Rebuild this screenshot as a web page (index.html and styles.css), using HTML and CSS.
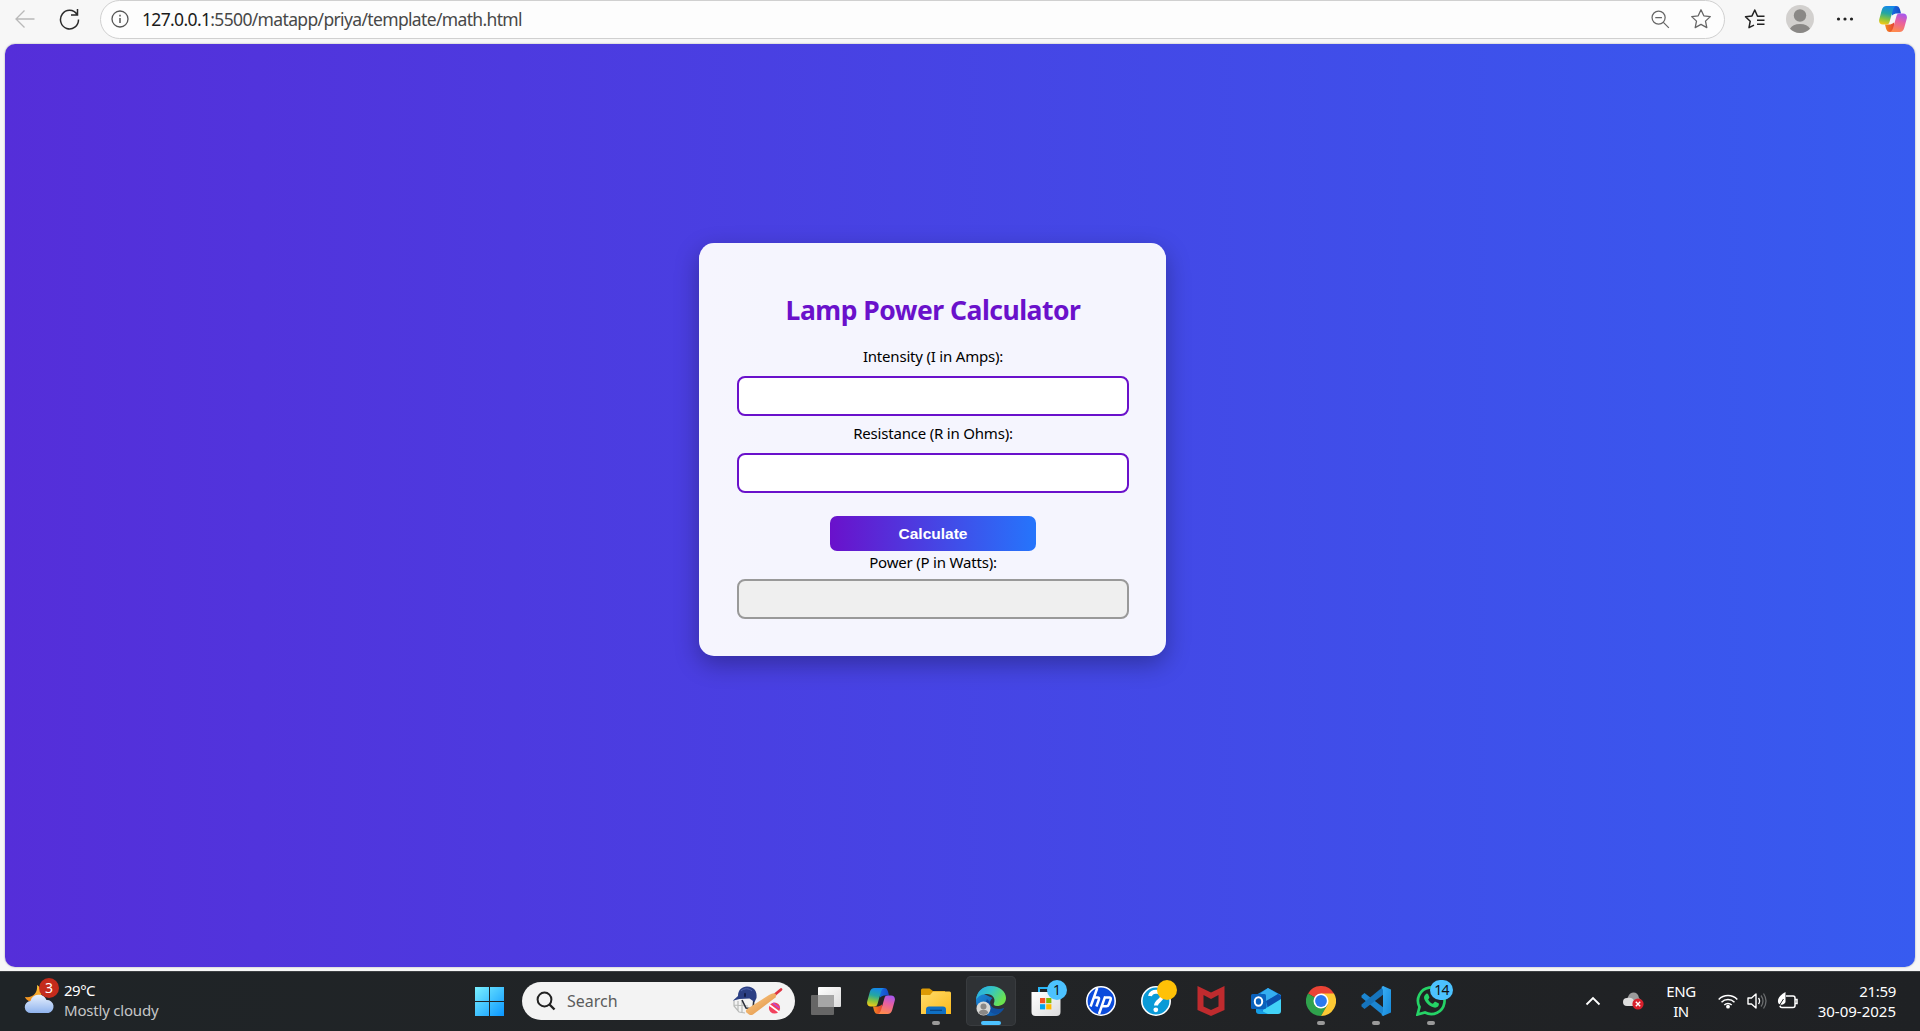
FILE: index.html
```html
<!DOCTYPE html>
<html lang="en">
<head>
<meta charset="utf-8">
<title>Lamp Power Calculator</title>
<link rel="stylesheet" href="styles.css">
</head>
<body>
<svg class="defs" width="0" height="0" aria-hidden="true">
  <defs>
    <linearGradient id="cpTop" x1="0" y1="0" x2="1" y2="0"><stop offset="0" stop-color="#1670e0"/><stop offset="1" stop-color="#1648c8"/></linearGradient>
    <linearGradient id="cpLeft" x1=".5" y1="0" x2=".3" y2="1"><stop offset="0" stop-color="#1487ea"/><stop offset=".4" stop-color="#25a7a0"/><stop offset=".7" stop-color="#86c440"/><stop offset="1" stop-color="#f6c916"/></linearGradient>
    <linearGradient id="cpRight" x1=".7" y1="0" x2=".4" y2="1"><stop offset="0" stop-color="#a757ee"/><stop offset=".45" stop-color="#e9609f"/><stop offset="1" stop-color="#ff8a4d"/></linearGradient>
    <linearGradient id="cpBottom" x1="0" y1="0" x2="1" y2="0"><stop offset="0" stop-color="#f58b1f"/><stop offset="1" stop-color="#e23b33"/></linearGradient>
    <symbol id="copilot" viewBox="0 0 28 26">
      <path d="M12 0h5c2.200 0 3.200 1 4 3.500L22 7.500h-3.500c-2.500 0-3.500.5-5.500 2z" fill="url(#cpTop)"/>
      <path d="M16 26h-5c-2.200 0-3.200-1-4-3.500L6 18.500h3.500c2.500 0 3.500-.5 5.500-2z" fill="url(#cpBottom)"/>
      <path d="M7.500 0H17c-1.800.8-2.500 2.200-3.200 4.500L10.500 16c-.6 1.800-1.500 2.500-3.500 2.500H4C1 18.500-.4 16.500.2 13.500L2.800 4C3.600 1.200 5 0 7.500 0z" fill="url(#cpLeft)"/>
      <path d="M20.500 26H11c1.800-.8 2.500-2.200 3.200-4.500L17.500 10c.6-1.800 1.500-2.500 3.500-2.500h3c3 0 4.400 2 3.800 5L25.200 22c-.8 2.800-2.200 4-4.700 4z" fill="url(#cpRight)"/>
    </symbol>
    <linearGradient id="win" x1="0" y1="0" x2="1" y2="1"><stop offset="0" stop-color="#7af0ff"/><stop offset="1" stop-color="#0a96ff"/></linearGradient>
    <linearGradient id="folder" x1="0" y1="0" x2="1" y2="1"><stop offset="0" stop-color="#ffdc6b"/><stop offset="1" stop-color="#fcba1c"/></linearGradient>
    <linearGradient id="edgeTop" x1="0" y1="0" x2="1" y2=".5"><stop offset="0" stop-color="#27a6e8"/><stop offset=".5" stop-color="#35c5c5"/><stop offset="1" stop-color="#6be34e"/></linearGradient>
    <linearGradient id="edgeLow" x1="0" y1="0" x2="1" y2="1"><stop offset="0" stop-color="#1e8fe0"/><stop offset="1" stop-color="#0b4f9e"/></linearGradient>
    <linearGradient id="cloud" x1="0" y1="0" x2="0" y2="1"><stop offset="0" stop-color="#e8f1fd"/><stop offset="1" stop-color="#8fb3ee"/></linearGradient>
    <linearGradient id="moon" x1="0" y1="0" x2="0" y2="1"><stop offset="0" stop-color="#ffc83a"/><stop offset="1" stop-color="#f0891c"/></linearGradient>
    <linearGradient id="bat" x1="0" y1="0" x2="1" y2="1"><stop offset="0" stop-color="#ffcf8c"/><stop offset="1" stop-color="#dc8b3c"/></linearGradient>
    <linearGradient id="paper" x1="0" y1="0" x2="1" y2="1"><stop offset="0" stop-color="#ffffff"/><stop offset="1" stop-color="#dcdcdc"/></linearGradient>
    <linearGradient id="code" x1="0" y1="0" x2="1" y2="1"><stop offset="0" stop-color="#3ab0f7"/><stop offset="1" stop-color="#1688d8"/></linearGradient>
  </defs>
</svg>

<header class="toolbar">
  <svg class="back" width="20" height="20" viewBox="0 0 20 20"><path d="M19.500 10H1.200M9.500 1.500 1 10l8.500 8.500" fill="none" stroke="#b9b9b9" stroke-width="1.300"/></svg>
  <svg class="reload" width="21" height="22" viewBox="0 0 20 22"><path d="M17.500 6.500A9 9.300 0 1 0 19 11.500M18 1v6h-6.500" fill="none" stroke="#2a2a2a" stroke-width="1.500"/></svg>
  <div class="address">
    <svg class="info" width="18" height="18" viewBox="0 0 18 18"><circle cx="9" cy="9" r="8" fill="none" stroke="#555" stroke-width="1.300"/><path d="M9 8v5M9 4.700v1.800" stroke="#555" stroke-width="1.500"/></svg>
    <span class="url"><span class="host">127.0.0.1</span>:5500/matapp/priya/template/math.html</span>
    <svg class="zoom" width="19" height="19" viewBox="0 0 20 20"><circle cx="8" cy="8" r="6.900" fill="none" stroke="#666" stroke-width="1.300"/><path d="M4.500 8h7M13 13l5.800 5.800" stroke="#666" stroke-width="1.300"/></svg>
    <svg class="star" width="22" height="22" viewBox="0 0 22 22"><path d="m11 1.800 2.800 6 6.500.8-4.800 4.500 1.300 6.500-5.800-3.200-5.800 3.200 1.300-6.500L1.700 8.600l6.500-.8z" fill="none" stroke="#666" stroke-width="1.300" stroke-linejoin="round"/></svg>
  </div>
  <svg class="favs" width="22" height="22" viewBox="0 0 22 22"><path d="M20.500 8.300h-7L10.800 2 8 7.900l-6.500.9 4.700 4.500L5 19.700l5-2.600M13 12.300h7.500M13 16.200h7.500" fill="none" stroke="#222" stroke-width="1.500" stroke-linejoin="round"/></svg>
  <svg class="avatar" width="28" height="28" viewBox="0 0 28 28"><circle cx="14" cy="14" r="14" fill="#d2d0ce"/><circle cx="14" cy="10.500" r="6.200" fill="#8a8886"/><path d="M4 23.800a10.600 7 0 0 1 20 0 14 14 0 0 1-20 0z" fill="#8a8886"/></svg>
  <svg class="dots" width="18" height="6" viewBox="0 0 18 6"><g fill="#222"><circle cx="2.500" cy="3" r="1.600"/><circle cx="9" cy="3" r="1.600"/><circle cx="15.500" cy="3" r="1.600"/></g></svg>
  <svg class="assistant" width="28" height="26"><use href="#copilot"/></svg>
</header>

<main class="page">
  <section class="card">
    <h1>Lamp Power Calculator</h1>
    <label class="l-int" for="i">Intensity (I in Amps):</label>
    <input id="i" type="text">
    <label class="l-res" for="r">Resistance (R in Ohms):</label>
    <input id="r" type="text">
    <button type="button">Calculate</button>
    <label class="l-pow" for="p">Power (P in Watts):</label>
    <input id="p" type="text" readonly>
  </section>
</main>

<footer class="taskbar">
  <div class="weather">
    <div class="weather-icon">
      <svg width="32" height="32" viewBox="0 0 32 32"><path d="M13 2c1 8-4 13-12 12 2 5 10 7 14 3S18 5 13 2z" fill="url(#moon)"/><path d="M7 30a6 6 0 0 1-.5-12A8.500 8.500 0 0 1 22.500 17a6.600 6.600 0 0 1 2 13z" fill="url(#cloud)"/></svg>
      <span class="alert">3</span>
    </div>
    <div class="weather-text"><span class="temp">29°C</span><span class="sky">Mostly cloudy</span></div>
  </div>

  <div class="start"><svg width="29" height="29" viewBox="0 0 29 29"><path d="M0 0h14v14H0zM15 0h14v14H15zM0 15h14v14H0zM15 15h14v14H15z" fill="url(#win)"/></svg></div>

  <div class="search">
    <svg width="20" height="20" viewBox="0 0 20 20"><circle cx="8.500" cy="8.500" r="6.900" fill="none" stroke="#222" stroke-width="2"/><path d="m13.500 13.500 5 5" stroke="#222" stroke-width="2.400"/></svg>
    <span class="search-text">Search</span>
    <svg class="cricket" width="50" height="30" viewBox="0 0 50 30"><path d="M1 14v6l5 6 6 1M1 19l14 1M5 15v10M9 15v11" fill="none" stroke="#b8bab8" stroke-width="1.200"/><path d="M9 14 13 22 20 23 21 12" fill="none" stroke="#2b2f3a" stroke-width="1.600"/><path d="M0 14.500 5 10C5 4 9 .5 14 .5c7 0 10.500 5 9.500 11.500l-2 4-5-3.500-10 .5-6 1.500z" fill="#2b3f83"/><path d="M8 5c3-3 8-3 11 0" stroke="#5269b0" fill="none"/><ellipse cx="12" cy="9" rx="1" ry="2.300" fill="#131c46"/><path d="m42 8.500 6-5" stroke="#de3442" stroke-width="2.800" stroke-linecap="round"/><path d="M14 23 36 9q4-2.500 6-1.500t.5 4L20 28.500q-2 1-4 0l-2.500-2q-1.500-1.500.5-3.500z" fill="url(#bat)"/><circle cx="41.500" cy="22" r="5.600" fill="#f2415c"/><path d="m36.500 19 9.500 7" stroke="#fff" stroke-width="1.600"/><path d="m40 17 6.500 5" stroke="#b44be0" stroke-width="1.400"/></svg>
  </div>

  <nav class="apps">
    <div class="app"><svg width="30" height="30" viewBox="0 0 30 30"><rect x="7" y="1" width="23" height="20" rx="1" fill="url(#paper)"/><rect y="9" width="23" height="20" rx="1" fill="#666"/><path d="M7 9h16v12H7z" fill="#a6a6a6"/></svg></div>
    <div class="app"><svg width="28" height="26"><use href="#copilot"/></svg></div>
    <div class="app"><svg width="30" height="30" viewBox="0 0 30 30"><path d="M0 4q0-1.500 1.500-1.500h7L12 5h12v6H0z" fill="#dd9a05"/><path d="M0 9h9l3-3.500h16.500Q30 5.500 30 7v21H0z" fill="url(#folder)"/><path d="M5 28v-4.500q0-3 3-3h14q3 0 3 3V28z" fill="#0f70c4"/><path d="M9 24.300h12" stroke="#08427f" stroke-width="1.200"/></svg><i class="mark"></i></div>
    <div class="app active"><svg width="30" height="30" viewBox="0 0 30 30"><path d="M15 0C6 0 0 7 0 15s7 15 15 15c6 0 10-3 13-8-5 3-14 2-14-5 0-2 1-4 2.500-5L8 8z" fill="url(#edgeLow)"/><path d="M0 14C1 5 7 0 15 0c9 0 15 6 15 12 0 6-5 8-9 8-3 0-4-1.500-3-3 2-5-2-9-7-9-5 0-9 2-11 6z" fill="url(#edgeTop)"/><path d="M11 13c-3 5 0 13 8 15 4 0 8-3 9-6-6 2-14 1-14-6z" fill="#104f9f"/><circle cx="7.500" cy="22.500" r="7" fill="#d7d7d5"/><circle cx="7.500" cy="20.500" r="3" fill="#8a8886"/><path d="M2.700 27a4.900 4 0 0 1 9.600 0 7 7 0 0 1-9.600 0z" fill="#8a8886"/></svg><i class="mark"></i></div>
    <div class="app"><svg width="30" height="30" viewBox="0 0 30 30"><path d="M8 7V2h12" fill="none" stroke="#29b6f6" stroke-width="2"/><path d="M.5 6h29v20q0 4-4 4h-21q-4 0-4-4z" fill="url(#paper)"/><path d="M9 12h5.200v5.200H9z" fill="#f25022"/><path d="M15.200 12h5.200v5.200h-5.200z" fill="#7fba00"/><path d="M9 18.200h5.200v5.200H9z" fill="#00a4ef"/><path d="M15.200 18.200h5.200v5.200h-5.200z" fill="#ffb900"/></svg><span class="badge">1</span></div>
    <div class="app"><svg width="30" height="30" viewBox="0 0 30 30"><circle cx="15" cy="15" r="14.200" fill="#0b4bdc" stroke="#fff" stroke-width="1.600"/><path d="M11.300 2 4.600 20.500M8.100 11.500h3.500q2 0 1.300 2l-2.500 7M19.200 10.300 13 28M18.500 11.500h4.800q2 0 1.400 2l-1.800 4.800q-.7 2-2.600 2H16" fill="none" stroke="#fff" stroke-width="2.500"/></svg></div>
    <div class="app"><svg width="30" height="30" viewBox="0 0 30 30"><circle cx="15" cy="15" r="14.200" fill="#0a9ad7" stroke="#fff" stroke-width="1.600"/><path d="M9 10c1-6 12-5.500 12 .5 0 4-6 4.500-6 9" fill="none" stroke="#fff" stroke-width="4"/><circle cx="14.800" cy="23.800" r="2.400" fill="#fff"/></svg><span class="badge amber"></span></div>
    <div class="app"><svg width="28" height="30" viewBox="0 0 28 30"><path d="m.5 0 13.500 6.500L27.500 0v24L14 30 .5 24z" fill="#bf2b2e"/><path d="m6.500 9 7.500 4 7.500-4v11.500L14 24l-7.500-3.500z" fill="#222426"/></svg></div>
    <div class="app"><svg width="30" height="30" viewBox="0 0 30 30"><path d="m5 9 12-7 13 7v15l-13 4-12-2z" fill="#1384dd"/><path d="m10 7 7-5 10 6-14 9z" fill="#35aef0"/><path d="m15 15 12-7 3 2v4L17 22z" fill="#0b50ad"/><path d="m30 13-18 11v4h15q3 0 3-3z" fill="#42d2f7"/><path d="m5 22 12 6H8q-3 0-3-3z" fill="#159de4"/><rect y="8" width="15" height="15" rx="1.500" fill="#0b62bd"/><ellipse cx="7.500" cy="15.500" rx="3.700" ry="4.200" fill="none" stroke="#fff" stroke-width="2"/></svg></div>
    <div class="app"><svg width="30" height="30" viewBox="0 0 30 30"><path d="M15 15 2 7.500A15 15 0 0 1 28 7.500z" fill="#ea4335"/><path d="M15 15 2 7.500A15 15 0 0 0 15 30l6.500-11z" fill="#2fa24c"/><path d="M15 7.500h13A15 15 0 0 1 15 30l6.500-11.200z" fill="#fcc934"/><circle cx="15" cy="15" r="7.500" fill="#fff"/><circle cx="15" cy="15" r="5.900" fill="#2a79ee"/></svg><i class="mark"></i></div>
    <div class="app"><svg width="30" height="30" viewBox="0 0 30 30"><path d="M.5 9.500 3.500 7 23 22v8L.5 11.500z" fill="#1c86d1"/><path d="M.5 20.500 3.500 23 23 8V0L.5 18.500z" fill="#1674bd"/><path d="m22 0 8 3.500v23L22 30l-1.500-1 1.500-3V4l-1.500-3z" fill="url(#code)"/></svg><i class="mark"></i></div>
    <div class="app"><svg width="30" height="30" viewBox="0 0 30 30"><path d="M1.500 28.500 3.500 21A13.300 13.300 0 1 1 9 26.500z" fill="none" stroke="#25d366" stroke-width="2.700"/><path d="M9.500 8.500c1-1.500 2.200-1.200 2.800 0l1 2.500c.3.700-.2 1.400-1.200 2.400 1.200 2.200 2.700 3.500 4.800 4.400l1.600-1.700c.5-.5 1-.4 1.500-.2l2.500 1.300c.6.400.5 1.200.1 2.200-.6 1.500-2.600 2.600-4.500 2.200C12 20 8 14.500 8 11.500c0-1.200.7-2.200 1.500-3z" fill="#25d366"/></svg><span class="badge wide">14</span><i class="mark"></i></div>
  </nav>

  <div class="tray">
    <svg class="chev" width="16" height="10" viewBox="0 0 16 10"><path d="m1.500 8.500 6.500-6.500 6.500 6.500" fill="none" stroke="#fff" stroke-width="1.800"/></svg>
    <svg class="drive" width="21" height="18" viewBox="0 0 21 18"><path d="M5 5c2-6 10-6 11 1l3 3-9 5-7-5z" fill="#9b9b9b"/><path d="M4 14a4 4 0 0 1 0-8c4-1 6 0 8 4l2 4z" fill="#dedede"/><circle cx="15" cy="12" r="5.600" fill="#d9202c"/><path d="m12.800 9.800 4.400 4.400m0-4.400-4.400 4.400" stroke="#fff" stroke-width="1.400"/></svg>
    <div class="lang"><span>ENG</span><span>IN</span></div>
    <svg class="wifi" width="20" height="16" viewBox="0 0 20 16"><g fill="none" stroke="#fff" stroke-width="1.500"><path d="M.7 6.500a13 13 0 0 1 18.600 0M3.500 9.200a9.200 9.200 0 0 1 13 0M6.300 12a5.300 5.300 0 0 1 7.400 0"/></g><circle cx="10" cy="13.700" r="1.900" fill="#fff"/></svg>
    <svg class="sound" width="20" height="18" viewBox="0 0 20 18"><path d="M1 6h3.500L9 2v14l-4.500-4H1z" fill="none" stroke="#fff" stroke-width="1.400" stroke-linejoin="round"/><path d="M11.500 6q2.200 3 0 6" fill="none" stroke="#fff" stroke-width="1.300"/><path d="M14 3.500q4 5.500 0 11M16.500 1.500q5 7.500 0 15" fill="none" stroke="#6b6d6f" stroke-width="1.300"/></svg>
    <svg class="power" width="21" height="18" viewBox="0 0 21 18"><path d="M9 4h7q2 0 2 2v7.500q0 2-2 2H5q-2 0-2-2M18.500 7.500h1.500v4h-1.500" fill="none" stroke="#fff" stroke-width="1.500"/><path d="M8.500 0v10c-.5 2-4 4-7 1.500C-.5 7 3 3 8.500 0z" fill="#fff"/><path d="M2 14 6.500 7" stroke="#222426"/></svg>
    <div class="clock"><span class="time">21:59</span><span class="date">30-09-2025</span></div>
  </div>
</footer>
</body>
</html>
```

FILE: styles.css
```css
* { box-sizing: border-box; }

body {
  margin: 0;
  width: 1920px;
  height: 1031px;
  overflow: hidden;
  display: flex;
  flex-direction: column;
  background: #f7f7f7;
  font-family: "Noto Sans", "Open Sans", sans-serif;
  color: #000;
}

svg { display: block; flex: none; }
.defs { position: absolute; }

.toolbar {
  height: 44px;
  flex: none;
  display: flex;
  align-items: center;
  padding: 0 12px 6px 15px;
}
.reload { margin-left: 24px; }
.address {
  width: 1625px;
  height: 39px;
  margin-left: 20px;
  padding: 0 12px 0 10px;
  display: flex;
  align-items: center;
  background: #fdfdfd;
  border: 1.500px solid #d0d0d0;
  border-radius: 20px;
}
.url {
  margin-left: 13px;
  flex: 1;
  font-size: 17.500px;
  line-height: 24px;
  letter-spacing: -0.650px;
  color: #484848;
  white-space: nowrap;
}
.host { color: #1b1b1b; }
.star { margin-left: 20px; }
.favs { margin-left: 19px; }
.avatar { margin-left: 20px; }
.dots { margin-left: 22px; }
.assistant { margin-left: 25px; }

.page {
  height: 923px;
  flex: none;
  margin: 0 5px;
  padding: 199px 0 0 694px;
  border-radius: 10px;
  background: linear-gradient(90deg, #552ed9, #375bf0);
  box-shadow: 0 0 2px rgba(0, 0, 0, .35);
}
.card {
  width: 467px;
  height: 413px;
  padding: 47px 37px 0 38px;
  display: flex;
  flex-direction: column;
  align-items: center;
  border-radius: 15px;
  background: rgba(255, 255, 255, .95);
  box-shadow: 0 8px 25px rgba(0, 0, 0, .3);
}
h1 {
  margin: 0;
  height: 40px;
  line-height: 40px;
  font-size: 26.500px;
  font-weight: 700;
  letter-spacing: -0.500px;
  color: #6a11cb;
  white-space: nowrap;
}
label {
  height: 20px;
  line-height: 20px;
  font-size: 15px;
  letter-spacing: -0.200px;
  white-space: nowrap;
}
.l-int { margin-top: 16px; }
.l-res { margin-top: 7px; }
.l-pow { margin-top: 1px; }
input {
  width: 392px;
  height: 40px;
  margin: 10px 0 0;
  border: 2.400px solid #6a11cb;
  border-radius: 8px;
  background: #fff;
}
input[readonly] { margin-top: 7px; border-color: #999; background: #efefef; }
button {
  width: 206px;
  height: 35px;
  margin-top: 23px;
  padding: 1px 0 0;
  border: 0;
  border-radius: 7px;
  background: linear-gradient(90deg, #6a11cb, #2575fc);
  color: #fff;
  font: bold 15.500px "Liberation Sans", sans-serif;
}

.taskbar {
  height: 60px;
  flex: none;
  margin-top: 4px;
  padding-bottom: 1px;
  display: flex;
  align-items: center;
  background: linear-gradient(90deg, #1f2427, #222426 50%, #1f2124);
  border-top: 1px solid #3d4043;
  color: #fff;
  font-size: 15px;
}
.weather { width: 464px; display: flex; padding-left: 24px; }
.weather-icon { position: relative; width: 32px; height: 40px; padding-top: 2px; }
.alert {
  position: absolute;
  left: 15px;
  top: -3px;
  width: 20px;
  height: 20px;
  border-radius: 50%;
  background: #c42b1c;
  text-align: center;
  font-size: 14px;
  line-height: 20px;
}
.weather-text, .lang, .clock { display: flex; flex-direction: column; line-height: 20px; margin-top: -1px; }
.weather-text { margin-left: 8px; }
.temp { letter-spacing: -0.500px; }
.sky { color: #c5c6c7; letter-spacing: -0.200px; }

.start { width: 50px; display: flex; justify-content: center; }
.search {
  width: 273px;
  height: 38px;
  margin-left: 8px;
  padding: 0 12px 0 14px;
  display: flex;
  align-items: center;
  border-radius: 19px;
  background: #f3f3f3;
}
.search-text { margin-left: 11px; flex: 1; font-size: 16px; color: #5c5c5c; }

.apps { display: flex; gap: 5px; margin-left: 6px; }
.app {
  position: relative;
  width: 50px;
  height: 50px;
  display: flex;
  align-items: center;
  justify-content: center;
  border-radius: 5px;
}
.active { background: #2f3235; box-shadow: inset 0 0 0 1px #393c3f; }
.mark {
  position: absolute;
  left: 21px;
  top: 45px;
  width: 8px;
  height: 4px;
  border-radius: 2px;
  background: #9a9a9a;
}
.active .mark { left: 15px; width: 20px; background: #4cc2ff; }
.badge {
  position: absolute;
  left: 26px;
  top: 4px;
  width: 20px;
  height: 20px;
  border-radius: 10px;
  background: #4cc2ff;
  color: #111;
  text-align: center;
  font-size: 14px;
  line-height: 20px;
}
.amber { background: #ffc107; }
.wide { left: 24px; width: 23px; letter-spacing: -0.800px; }

.tray { flex: 1; display: flex; align-items: center; padding-right: 24px; }
.chev { margin-left: 129px; }
.drive { margin-left: 22px; }
.lang { width: 40px; margin-left: 17px; align-items: center; letter-spacing: -0.400px; }
.wifi { margin-left: 17px; }
.sound { margin-left: 9px; }
.power { margin-left: 10px; }
.clock { margin-left: auto; align-items: flex-end; }
.time { letter-spacing: -0.300px; }
.date { letter-spacing: 0; }
```
